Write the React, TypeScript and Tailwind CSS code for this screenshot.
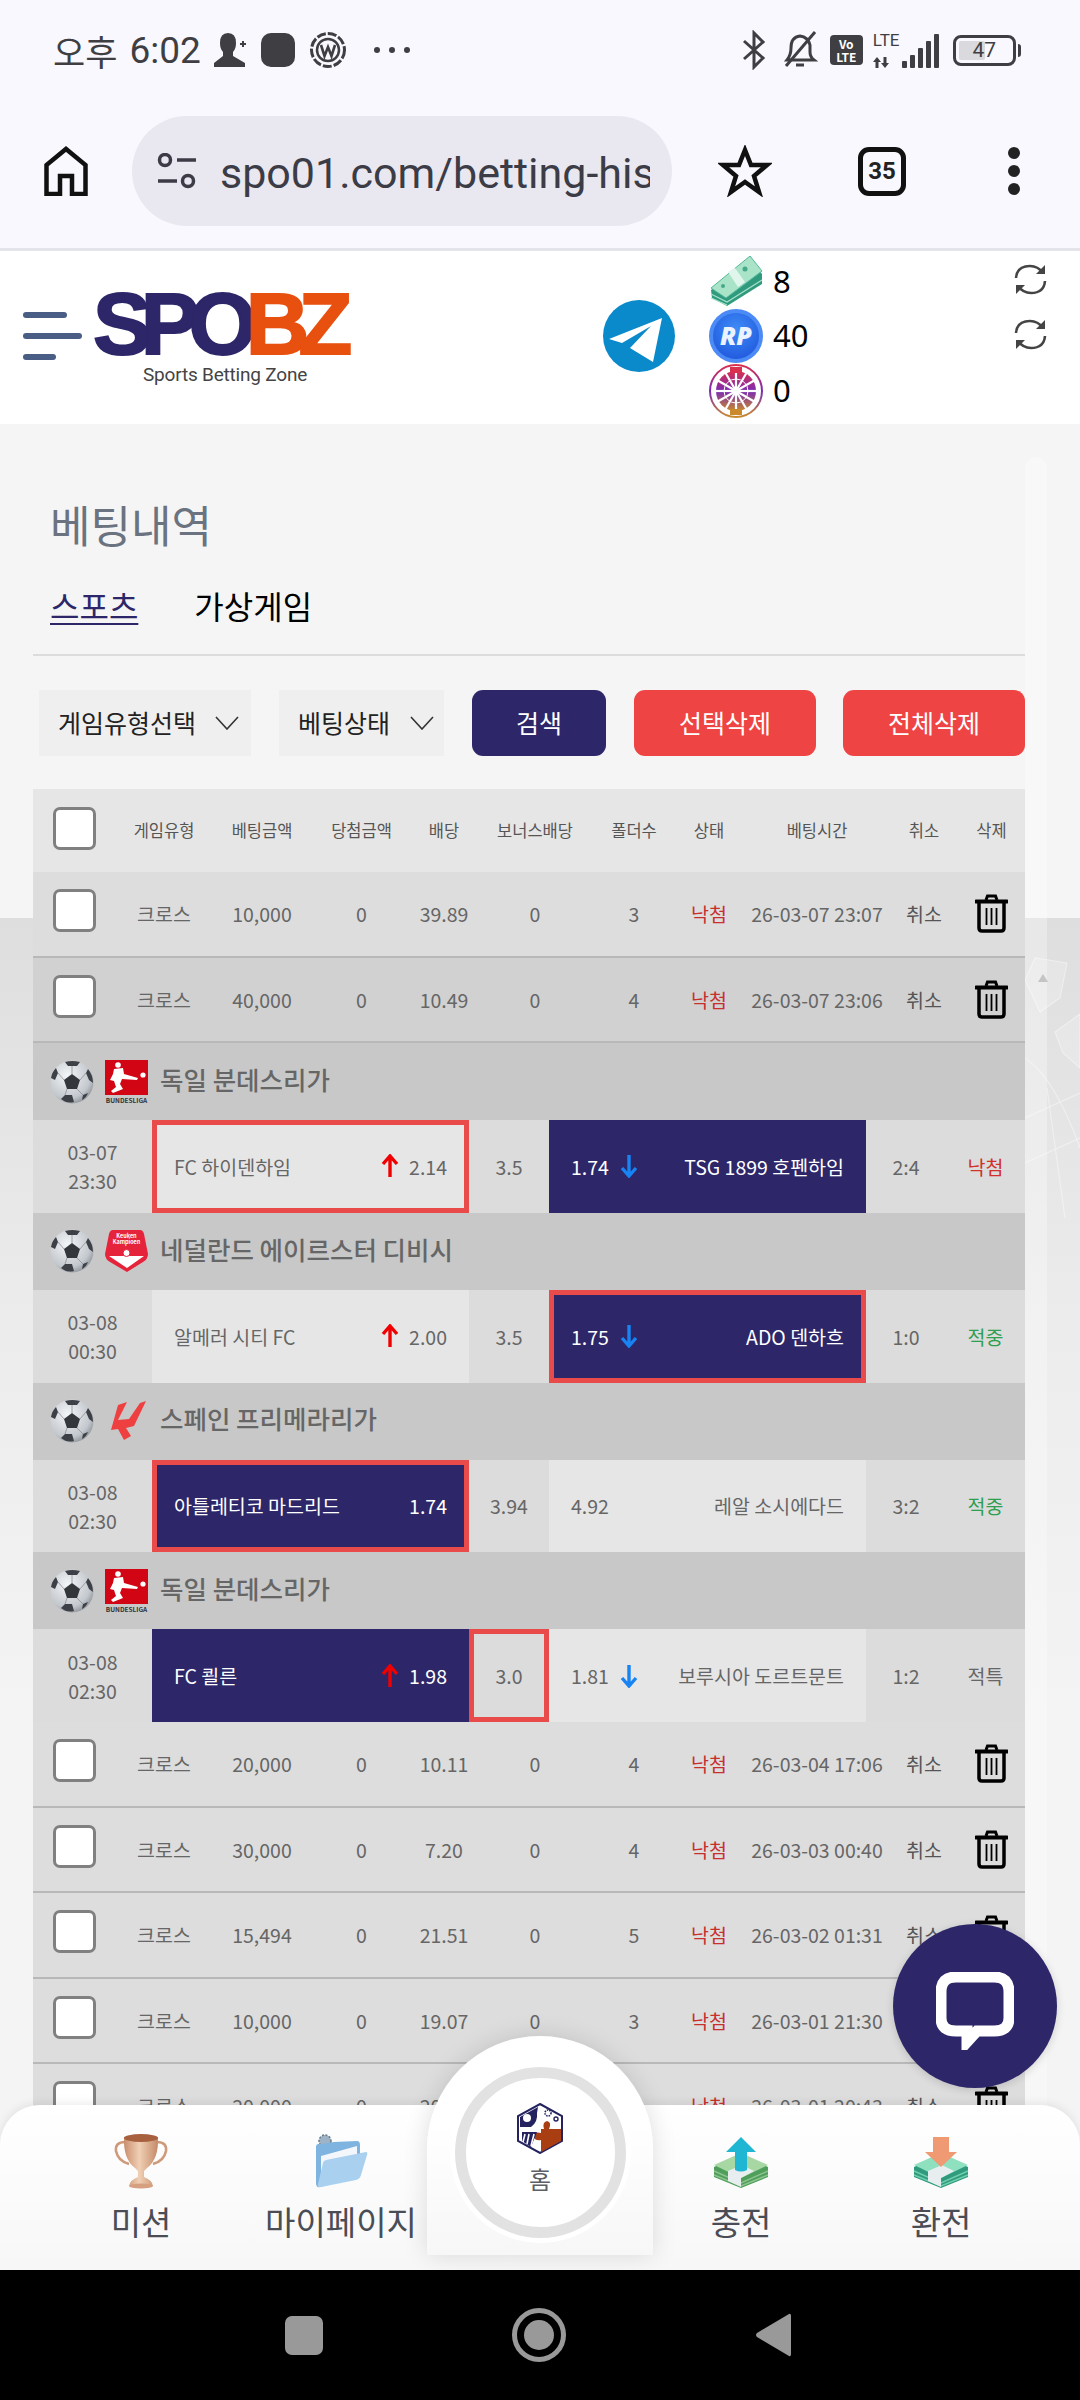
import type { ReactNode } from "react";

type BetRow = {
  amount: string;
  odds: string;
  folders: string;
  time: string;
  dark?: boolean;
};

type Match = {
  league: string;
  logo: "bundes" | "keuken" | "laliga";
  date: string;
  clock: string;
  home: string;
  homeOdds: string;
  homeUp?: boolean;
  line: string;
  away: string;
  awayOdds: string;
  awayDown?: boolean;
  score: string;
  result: string;
  resultColor: string;
  pick: "home" | "away";
  boxed: "home" | "away" | "line";
};

const topRows: BetRow[] = [
  { amount: "10,000", odds: "39.89", folders: "3", time: "26-03-07 23:07" },
  { amount: "40,000", odds: "10.49", folders: "4", time: "26-03-07 23:06", dark: true },
];

const bottomRows: BetRow[] = [
  { amount: "20,000", odds: "10.11", folders: "4", time: "26-03-04 17:06" },
  { amount: "30,000", odds: "7.20", folders: "4", time: "26-03-03 00:40" },
  { amount: "15,494", odds: "21.51", folders: "5", time: "26-03-02 01:31" },
  { amount: "10,000", odds: "19.07", folders: "3", time: "26-03-01 21:30" },
  { amount: "20,000", odds: "20.15", folders: "4", time: "26-03-01 20:43" },
];

const matches: Match[] = [
  {
    league: "독일 분데스리가", logo: "bundes", date: "03-07", clock: "23:30",
    home: "FC 하이덴하임", homeOdds: "2.14", homeUp: true, line: "3.5",
    away: "TSG 1899 호펜하임", awayOdds: "1.74", awayDown: true, score: "2:4",
    result: "낙첨", resultColor: "text-[#d0312d]", pick: "away", boxed: "home",
  },
  {
    league: "네덜란드 에이르스터 디비시", logo: "keuken", date: "03-08", clock: "00:30",
    home: "알메러 시티 FC", homeOdds: "2.00", homeUp: true, line: "3.5",
    away: "ADO 덴하흐", awayOdds: "1.75", awayDown: true, score: "1:0",
    result: "적중", resultColor: "text-[#2e9e4f]", pick: "away", boxed: "away",
  },
  {
    league: "스페인 프리메라리가", logo: "laliga", date: "03-08", clock: "02:30",
    home: "아틀레티코 마드리드", homeOdds: "1.74", line: "3.94",
    away: "레알 소시에다드", awayOdds: "4.92", score: "3:2",
    result: "적중", resultColor: "text-[#2e9e4f]", pick: "home", boxed: "home",
  },
  {
    league: "독일 분데스리가", logo: "bundes", date: "03-08", clock: "02:30",
    home: "FC 쾰른", homeOdds: "1.98", homeUp: true, line: "3.0",
    away: "보루시아 도르트문트", awayOdds: "1.81", awayDown: true, score: "1:2",
    result: "적특", resultColor: "text-[#666]", pick: "home", boxed: "line",
  },
];

function Trash() {
  return (
    <svg width="33" height="39" viewBox="0 0 33 39" fill="none" stroke="#000">
      <path d="M11 6 L12.5 2 H20.5 L22 6" strokeWidth="3" />
      <path d="M1 7.5 H32" strokeWidth="4" strokeLinecap="round" />
      <path d="M4 9 V34 Q4 37 7 37 H26 Q29 37 29 34 V9" strokeWidth="3.5" />
      <path d="M11.5 14 V31 M16.5 14 V31 M21.5 14 V31" strokeWidth="1.8" />
    </svg>
  );
}

function Check() {
  return <div className="h-[43px] w-[43px] rounded-[7px] border-[3px] border-[#808080] bg-white" />;
}

const rowGrid = "grid grid-cols-[82px_98px_98px_101px_64px_118px_80px_70px_146px_68px_67px] items-center text-center";

function DataRow({ row }: { row: BetRow }) {
  return (
    <div className={`${rowGrid} h-[85.5px] border-b-[2px] border-[#b8b8b8] text-[19.5px] text-[#666] ${row.dark ? "bg-[#d1d1d1]" : "bg-[#dddddd]"}`}>
      <div className="mb-[6px] flex justify-center"><Check /></div>
      <div>크로스</div>
      <div>{row.amount}</div>
      <div>0</div>
      <div>{row.odds}</div>
      <div>0</div>
      <div>{row.folders}</div>
      <div className="text-[#c8302e]">낙첨</div>
      <div className="whitespace-nowrap">{row.time}</div>
      <div className="text-[#555]">취소</div>
      <div className="flex justify-center"><Trash /></div>
    </div>
  );
}

function Ball() {
  return (
    <svg width="44" height="44" viewBox="0 0 44 44">
      <defs>
        <radialGradient id="ballFill" cx="0.4" cy="0.35" r="0.75">
          <stop offset="0" stopColor="#f4f6f8" />
          <stop offset="0.7" stopColor="#c3c8ce" />
          <stop offset="1" stopColor="#7d838a" />
        </radialGradient>
      </defs>
      <circle cx="22" cy="22" r="21.5" fill="url(#ballFill)" />
      <path d="M22 14 L30 20 L27 29 H17 L14 20 Z" fill="#33363b" />
      <path d="M15 2 Q22 0 30 2 L27 6 H18 Z M38 9 Q43 15 43 23 L39 20 L36 13 Z M1 18 Q2 12 6 8 L8 13 L5 20 Z M11 39 L15 35 H22 L24 42 Q17 44 11 39 Z M38 33 L33 35 L32 40 Q36 38 38 33 Z" fill="#3d4046" />
      <path d="M22 14 V6 M30 20 L36 13 M27 29 L33 35 M17 29 L15 35 M14 20 L8 13" stroke="#8b9096" strokeWidth="0.8" />
    </svg>
  );
}

function LeagueLogo({ kind }: { kind: Match["logo"] }) {
  if (kind === "bundes") {
    return (
      <div className="flex h-[44px] w-[43px] flex-col items-center">
        <svg width="43" height="35" viewBox="0 0 43 35">
          <rect width="43" height="35" fill="#d20515" />
          <circle cx="38" cy="15" r="2.6" fill="#fff" />
          <circle cx="13" cy="5" r="2.8" fill="#fff" />
          <path d="M9 9 L18 8 L19 14 L33 18 L32 20 L17 19 L15 24 L18 29 L8 33 L6 31 L11 27 L9 21 L5 20 L8 14 Z" fill="#fff" />
        </svg>
        <span className="mt-[1px] text-[6.5px] leading-[8px] font-bold text-[#333]">BUNDESLIGA</span>
      </div>
    );
  }
  if (kind === "keuken") {
    return (
      <div className="relative flex h-[44px] w-[43px] flex-col items-center">
        <svg width="43" height="44" viewBox="0 0 43 44" className="absolute inset-0">
          <path d="M8 1 H35 Q38 1 39 5 L43 25 Q43 30 38 33 L22 43 L5 33 Q0 30 0 25 L4 5 Q5 1 8 1 Z" fill="#e5243b" />
          <path d="M4 27 H39 L22 39 Z" fill="#fff" />
          <circle cx="21.5" cy="24" r="3.5" fill="#fff" stroke="#e5243b" />
        </svg>
        <span className="relative mt-[4px] text-[5.5px] leading-[6px] font-bold text-white">Keuken</span>
        <span className="relative text-[5.5px] leading-[6px] font-bold text-white">Kampioen</span>
      </div>
    );
  }
  return (
    <svg width="43" height="44" viewBox="0 0 43 44">
      <path d="M13 6 L22 3 L13 21 L24 20 L35 4 L41 2 L29 27 L21 29 L26 37 L19 41 L13 30 L6 31 Z" fill="#ee4040" />
    </svg>
  );
}

function UpArrow() {
  return (
    <svg width="18" height="24" viewBox="0 0 18 24" fill="none" stroke="#f00000" strokeWidth="3.4">
      <path d="M9 23 V3 M2 10 L9 2 L16 10" />
    </svg>
  );
}

function DownArrow() {
  return (
    <svg width="18" height="24" viewBox="0 0 18 24" fill="none" stroke="#1883f2" strokeWidth="3.4">
      <path d="M9 1 V21 M2 14 L9 22 L16 14" />
    </svg>
  );
}

function MatchBlock({ match }: { match: Match }) {
  return (
    <div>
      <div className="flex h-[77px] items-center bg-[#c8c8c8] pl-[17px]">
        <Ball />
        <div className="ml-[11px]"><LeagueLogo kind={match.logo} /></div>
        <div className="mb-[5px] ml-[12px] text-[25.5px] font-medium text-[#666]">{match.league}</div>
      </div>
      <div className="grid h-[92.75px] grid-cols-[119px_317px_80px_317px_80px_79px] bg-[#dcdcdc] text-[19.5px] text-[#666]">
        <div className="flex flex-col items-center justify-center leading-[29px]">
          <span>{match.date}</span>
          <span>{match.clock}</span>
        </div>
        <div className={`flex items-center justify-between border-[5px] px-[17px] ${match.boxed === "home" ? "border-[#e94b4b]" : "border-transparent"} ${match.pick === "home" ? "bg-[#2d2769] text-white" : "bg-[#e6e6e6]"}`}>
          <span>{match.home}</span>
          <span className="flex items-center gap-[10px]">
            {match.homeUp && <UpArrow />}
            {match.homeOdds}
          </span>
        </div>
        <div className={`flex items-center justify-center border-[5px] ${match.boxed === "line" ? "border-[#e94b4b]" : "border-transparent"}`}>{match.line}</div>
        <div className={`flex items-center justify-between border-[5px] px-[17px] ${match.boxed === "away" ? "border-[#e94b4b]" : "border-transparent"} ${match.pick === "away" ? "bg-[#2d2769] text-white" : "bg-[#e6e6e6]"}`}>
          <span className="flex items-center gap-[11px]">
            {match.awayOdds}
            {match.awayDown && <DownArrow />}
          </span>
          <span>{match.away}</span>
        </div>
        <div className="flex items-center justify-center">{match.score}</div>
        <div className={`flex items-center justify-center ${match.resultColor}`}>{match.result}</div>
      </div>
    </div>
  );
}

function StatusBar() {
  return (
    <div className="flex h-[100px] items-center bg-[#f8f8fe] pl-[53px] text-[#3f3f43]">
      <span className="text-[35px] leading-none">오후</span>
      <span className="ml-[12px] font-['Roboto',sans-serif] text-[37px] leading-none">6:02</span>
      <svg className="ml-[12px]" width="34" height="36" viewBox="0 0 34 36" fill="#3f3f43">
        <path d="M15 1 Q23 1 23 11 Q23 17 20 20 V24 L32 31 V35 H1 V31 L10 24 V20 Q7 17 7 11 Q7 1 15 1 Z" />
        <path d="M27 12 H33 M30 9 V15" stroke="#3f3f43" strokeWidth="2" />
      </svg>
      <div className="ml-[14px] h-[34px] w-[34px] rounded-[10px] bg-[#3f3f43]" />
      <svg className="ml-[15px]" width="36" height="36" viewBox="0 0 36 36" fill="none" stroke="#3f3f43">
        <circle cx="18" cy="18" r="16.5" strokeWidth="3" strokeDasharray="9 2" />
        <circle cx="18" cy="18" r="11" strokeWidth="2.5" />
        <path d="M11 13 L14.5 24 L18 15 L21.5 24 L25 13" strokeWidth="2.6" />
      </svg>
      <div className="ml-[28px] flex gap-[9px]">
        <div className="h-[6px] w-[6px] rounded-full bg-[#3f3f43]" />
        <div className="h-[6px] w-[6px] rounded-full bg-[#3f3f43]" />
        <div className="h-[6px] w-[6px] rounded-full bg-[#3f3f43]" />
      </div>
      <svg className="ml-[331px]" width="26" height="40" viewBox="0 0 26 40" fill="none" stroke="#3f3f43" strokeWidth="3">
        <path d="M3 11 L22 28 L13 37 V3 L22 12 L3 29" />
      </svg>
      <svg className="ml-[15px]" width="36" height="40" viewBox="0 0 36 40" fill="none" stroke="#3f3f43" strokeWidth="3">
        <path d="M5 30 Q9 25 9 18 Q9 7 18 6 Q26 7 28 15 V22 Q28 27 32 30 Z" />
        <path d="M14 35 H22" />
        <path d="M4 36 L33 2" />
      </svg>
      <div className="ml-[12px] flex h-[30px] w-[33px] flex-col items-center justify-center rounded-[4px] bg-[#3f3f43] text-[12px] leading-[13px] font-bold text-white">
        <span>Vo</span>
        <span>LTE</span>
      </div>
      <div className="ml-[10px] flex h-[36px] w-[66px] justify-between">
        <div className="flex h-full flex-col justify-between">
          <span className="font-['Roboto',sans-serif] text-[17px] leading-[16px]">LTE</span>
          <svg width="16" height="11" viewBox="0 0 16 11" fill="#3f3f43">
            <path d="M4 0 L8 5 H5.5 V11 H2.5 V5 H0 Z M12 11 L8 6 H10.5 V0 H13.5 V6 H16 Z" />
          </svg>
        </div>
        <div className="flex items-end gap-[3px]">
          <div className="h-[7px] w-[5px] rounded-[1px] bg-[#3f3f43]" />
          <div className="h-[13px] w-[5px] rounded-[1px] bg-[#3f3f43]" />
          <div className="h-[20px] w-[5px] rounded-[1px] bg-[#3f3f43]" />
          <div className="h-[27px] w-[5px] rounded-[1px] bg-[#3f3f43]" />
          <div className="h-[34px] w-[5px] rounded-[1px] bg-[#3f3f43]" />
        </div>
      </div>
      <div className="ml-[14px] flex items-center">
        <div className="relative flex h-[31px] w-[63px] items-center justify-center overflow-hidden rounded-[8px] border-[3px] border-[#3f3f43]">
          <div className="absolute top-[3px] bottom-[3px] left-[3px] w-[26px] rounded-[2px] bg-[#d9d9de]" />
          <span className="relative font-['Roboto',sans-serif] text-[21px] leading-none">47</span>
        </div>
        <div className="ml-[2px] h-[13px] w-[3px] rounded-r bg-[#3f3f43]" />
      </div>
    </div>
  );
}

function UrlBar() {
  return (
    <div className="flex h-[151px] items-start border-b-[3px] border-[#e3e3ea] bg-[#f8f8fe] pt-[16px]">
      <div className="flex h-[110px] items-center">
        <svg className="ml-[44px]" width="44" height="50" viewBox="0 0 44 50" fill="none" stroke="#111" strokeWidth="4.5">
          <path d="M2.5 48 V19 L22 3 L41.5 19 V48 H28 V30 H16 V48 Z" />
        </svg>
        <div className="ml-[44px] flex h-[110px] w-[540px] items-center overflow-hidden rounded-full bg-[#e9e8f1] pl-[25px]">
          <svg width="40" height="36" viewBox="0 0 40 36" fill="none" stroke="#3c3c46" strokeWidth="3.5" className="shrink-0">
            <circle cx="8" cy="7" r="5.5" />
            <path d="M20 7 H39" />
            <circle cx="31" cy="28" r="5.5" />
            <path d="M1 28 H20" />
          </svg>
          <span className="ml-[23px] w-[430px] shrink-0 overflow-hidden pt-[4px] font-['Roboto',sans-serif] text-[43px] whitespace-nowrap text-[#3c3c46]">spo01.com/betting-history</span>
        </div>
        <svg className="ml-[46px]" width="54" height="52" viewBox="0 0 54 52" fill="none" stroke="#111" strokeWidth="4.5">
          <path d="M27 5 L33 20 H49 L36 31 L41 47 L27 37 L13 47 L18 31 L5 20 H21 Z" />
        </svg>
        <div className="ml-[86px] flex h-[49px] w-[48px] items-center justify-center rounded-[11px] border-[5px] border-[#111] font-['Roboto',sans-serif] text-[24px] font-bold text-[#222]">35</div>
        <div className="ml-[102px] flex flex-col gap-[6px]">
          <div className="h-[12px] w-[12px] rounded-full bg-[#222]" />
          <div className="h-[12px] w-[12px] rounded-full bg-[#222]" />
          <div className="h-[12px] w-[12px] rounded-full bg-[#222]" />
        </div>
      </div>
    </div>
  );
}

function Cash() {
  return (
    <svg width="54" height="50" viewBox="0 0 54 50">
      <path d="M2 34 L41 4 L53 18 V28 L18 50 L3 42 Z" fill="#2f9a7e" />
      <path d="M2 38 L18 46 L53 24 M2 42 L18 49" stroke="#a6e2c8" strokeWidth="1.2" fill="none" />
      <path d="M2 32 L41 0 L53 15 L17 42 Z" fill="#a9e3c8" stroke="#55b89a" strokeWidth="1" />
      <path d="M19 16 L26 12 L36 26 L29 31 Z" fill="#e0f5ec" />
      <circle cx="14" cy="30" r="2" fill="#46a98b" />
      <circle cx="36" cy="13" r="2.5" fill="#46a98b" />
    </svg>
  );
}

function RpCoin() {
  return (
    <div className="flex h-[54px] w-[54px] items-center justify-center rounded-full border-[4px] border-[#4c8bf5] bg-[radial-gradient(circle_at_50%_35%,#3f8cf8,#1a4fd8)] font-['Open_Sans',sans-serif] text-[25px] leading-none font-extrabold text-[#eaf3ff] italic">
      RP
    </div>
  );
}

function DartWheel() {
  const spokes = [0, 30, 60, 90, 120, 150, 180, 210, 240, 270, 300, 330];
  return (
    <svg width="54" height="54" viewBox="0 0 54 54">
      <defs>
        <linearGradient id="dart" x1="0" y1="0" x2="0" y2="1">
          <stop offset="0" stopColor="#d9304f" />
          <stop offset="0.5" stopColor="#7a2bb5" />
          <stop offset="1" stopColor="#c9892c" />
        </linearGradient>
      </defs>
      <circle cx="27" cy="27" r="26" fill="#fff" stroke="url(#dart)" strokeWidth="2" />
      <circle cx="27" cy="27" r="20" fill="url(#dart)" />
      {spokes.map((a) => (
        <path key={a} d="M27 27 L27 5" stroke="#fff" strokeWidth="2.2" transform={`rotate(${a} 27 27)`} />
      ))}
      <circle cx="27" cy="27" r="12" fill="none" stroke="#fff" strokeWidth="1" />
      <rect x="21" y="3" width="12" height="6" fill="#d9304f" />
      <rect x="21" y="45" width="12" height="6" fill="#c9892c" />
    </svg>
  );
}

function Refresh() {
  return (
    <svg width="33" height="33" viewBox="0 0 33 33" fill="none" stroke="#444" strokeWidth="2.6">
      <path d="M2 15 Q3 3 16 3 Q24 3 29 10" />
      <path d="M31 2 V11 L22 11 Z" fill="#444" stroke="none" />
      <path d="M31 18 Q30 30 17 30 Q9 30 4 23" />
      <path d="M2 31 V22 L11 22 Z" fill="#444" stroke="none" />
    </svg>
  );
}

function Header() {
  return (
    <div className="flex h-[173px] items-start bg-white">
      <div className="ml-[23px] mt-[61px] flex flex-col gap-[15px]">
        <div className="h-[6px] w-[44px] rounded-full bg-[#4a5d85]" />
        <div className="h-[6px] w-[59px] rounded-full bg-[#4a5d85]" />
        <div className="h-[6px] w-[33px] rounded-full bg-[#4a5d85]" />
      </div>
      <div className="ml-[11px] mt-[35px] flex w-[256px] flex-col font-['Liberation_Sans',sans-serif]">
        <div className="h-[77px] text-[88px] leading-[76px] font-bold tracking-[-11px] whitespace-nowrap [-webkit-text-stroke:2px_currentColor]">
          <span className="text-[#2d2769]">SPO</span>
          <span className="text-[#e8500f]">BZ</span>
        </div>
        <div className="ml-[50px] font-['Roboto',sans-serif] text-[19px] leading-[24px] tracking-[-0.2px] whitespace-nowrap text-[#444]">Sports Betting Zone</div>
      </div>
      <svg className="ml-[254px] mt-[49px]" width="72" height="72" viewBox="0 0 72 72">
        <circle cx="36" cy="36" r="36" fill="#0a8acb" />
        <path d="M6 39 L59 18 L50 62 L27 48 L48 26 L19 43 Z" fill="#fff" />
      </svg>
      <div className="ml-[34px] mt-[3px] flex flex-col font-['Noto_Sans',sans-serif] text-[31px] text-black">
        <div className="flex h-[54px] items-center gap-[10px]"><Cash /><span>8</span></div>
        <div className="flex h-[55px] items-center gap-[10px]"><RpCoin /><span>40</span></div>
        <div className="flex h-[55px] items-center gap-[10px]"><DartWheel /><span>0</span></div>
      </div>
      <div className="ml-auto mr-[33px] mt-[12px] flex flex-col gap-[22px]">
        <Refresh />
        <Refresh />
      </div>
    </div>
  );
}

function Trophy() {
  return (
    <svg width="54" height="56" viewBox="0 0 54 56">
      <defs>
        <linearGradient id="copper" x1="0" y1="0" x2="1" y2="0">
          <stop offset="0" stopColor="#c98e6d" />
          <stop offset="0.45" stopColor="#f0cfb5" />
          <stop offset="1" stopColor="#c48a68" />
        </linearGradient>
      </defs>
      <path d="M11 9 Q1 9 2 18 Q4 28 15 31 M43 9 Q53 9 52 18 Q50 28 39 31" fill="none" stroke="#cf9a7a" strokeWidth="2.6" />
      <path d="M10 4 Q27 0 44 4 Q45 26 33 35 L30 38 V44 Q38 47 39 53 H15 Q16 47 24 44 V38 L21 35 Q9 26 10 4 Z" fill="url(#copper)" />
      <ellipse cx="27" cy="5" rx="17" ry="4" fill="#a8613f" />
      <ellipse cx="27" cy="53" rx="12" ry="2.5" fill="#d69f80" />
    </svg>
  );
}

function Folder() {
  return (
    <svg width="54" height="56" viewBox="0 0 54 56">
      <circle cx="11" cy="8" r="6" fill="#9fb3c6" stroke="#687a8c" strokeWidth="1.5" strokeDasharray="2 1.5" />
      <path d="M2 14 Q2 10 8 11 L20 9 L43 8 Q46 8 46 12 V44 L6 54 Q2 55 2 50 Z" fill="#7fb3e0" />
      <path d="M7 23 L43 13 V30 L7 40 Z" fill="#f3f7fb" />
      <path d="M12 27 L52 19 Q54 19 53 22 L47 42 Q46 46 42 47 L7 54 Q3 55 4 51 L9 30 Q9 28 12 27 Z" fill="#a9d0ef" />
    </svg>
  );
}

function BankNotes({ up }: { up: boolean }) {
  const greens = up ? ["#4f9e5c", "#a7d8a4", "#8bc48d"] : ["#2f9a7e", "#8fe0bf", "#6fcfaa"];
  return (
    <svg width="56" height="52" viewBox="0 0 56 52">
      <path d="M1 30 L28 18 L55 30 V40 L28 51 L1 40 Z" fill={greens[0]} />
      <path d="M1 34 L28 46 L55 34 M1 38 L28 49 L55 38" fill="none" stroke={greens[2]} strokeWidth="1.4" />
      <path d="M1 28 L28 16 L55 28 L28 41 Z" fill={greens[1]} />
      <path d="M15 34 L29 28 L41 34 L28 41 V50 L15 44 Z" fill="#e8eef0" />
      {up ? (
        <path d="M28 0 L43 15 H34 V33 Q28 36 22 33 V15 H13 Z" fill="#1fb6d3" />
      ) : (
        <path d="M20 0 H36 V15 H44 L28 30 L12 15 H20 Z" fill="#f09a74" />
      )}
    </svg>
  );
}

function HexLogo() {
  return (
    <svg width="46" height="51" viewBox="0 0 46 51">
      <path d="M23 1 L45 13 V38 L23 50 L1 38 V13 Z" fill="#fff" stroke="#25235f" strokeWidth="2" />
      <path d="M21 4 L3 14 V24 H14 Q21 19 20 10 Z" fill="#25235f" />
      <circle cx="10" cy="15" r="4" fill="#fff" />
      <path d="M44 26 H32 Q35 19 30 18 Q25 19 27 26 H24 V30 Q17 28 17 34 Q18 38 24 37 V49 L44 38 Z" fill="#a83e12" />
      <path d="M5 29 H20 L14 44 L5 38 Z" fill="#25235f" />
      <path d="M8 31 L6 39 M12 31 L10 41 M17 31 L14 43" stroke="#fff" strokeWidth="1.6" />
      <circle cx="31" cy="10" r="3" fill="none" stroke="#25235f" strokeWidth="1.6" strokeDasharray="1.5 1" />
      <circle cx="39" cy="16" r="2" fill="none" stroke="#25235f" strokeWidth="1.4" />
    </svg>
  );
}

function NavItem({ label, children }: { label: string; children: ReactNode }) {
  return (
    <div className="flex flex-col items-center">
      <div className="flex h-[58px] items-end">{children}</div>
      <div className="mt-[12px] text-[33px] leading-[40px] whitespace-nowrap text-[#4a4d55]">{label}</div>
    </div>
  );
}

function BottomNav() {
  return (
    <div className="absolute right-0 bottom-0 left-0 h-[165px] rounded-t-[40px] bg-[linear-gradient(#ffffff,#f7f7f7)] shadow-[0_-2px_10px_rgba(0,0,0,0.08)]">
      <div className="grid grid-cols-[200px_200px_200px_200px_200px] pl-[41px] pt-[26px]">
        <NavItem label="미션"><Trophy /></NavItem>
        <NavItem label="마이페이지"><Folder /></NavItem>
        <div />
        <NavItem label="충전"><BankNotes up /></NavItem>
        <NavItem label="환전"><BankNotes up={false} /></NavItem>
      </div>
      <div className="absolute top-[-69px] left-[427px] flex h-[219px] w-[226px] justify-center rounded-t-[113px] bg-[linear-gradient(#ffffff_40%,#f7f7f7)] pt-[31px] shadow-[0_0_24px_rgba(0,0,0,0.13)]">
        <div className="flex h-[171px] w-[171px] flex-col items-center rounded-full border-[11px] border-[#e2e2e2] bg-white pt-[25px] shadow-[0_0_0_5px_#ffffff]">
          <HexLogo />
          <div className="mt-[8px] text-[24px] leading-[34px] text-[#5c5f66]">홈</div>
        </div>
      </div>
    </div>
  );
}

function AndroidBar() {
  return (
    <div className="flex h-[130px] items-center bg-black">
      <div className="ml-[285px] h-[39px] w-[38px] rounded-[7px] bg-[#999]" />
      <div className="ml-[189px] flex h-[54px] w-[54px] items-center justify-center rounded-full border-[5px] border-[#999]">
        <div className="h-[30px] w-[30px] rounded-full bg-[#999]" />
      </div>
      <svg className="ml-[189px]" width="36" height="46" viewBox="0 0 36 46">
        <path d="M34 2 Q36 1 36 4 V42 Q36 45 34 44 L2 25 Q0 23 2 21 Z" fill="#999" />
      </svg>
    </div>
  );
}

export default function App() {
  return (
    <div className="flex h-[2400px] w-[1080px] flex-col overflow-hidden bg-white font-['Noto_Sans_CJK_KR','Noto_Sans',sans-serif]">
      <StatusBar />
      <UrlBar />
      <Header />

      <div className="relative flex-1 overflow-hidden bg-[linear-gradient(#f5f5f5_494px,#dedede_494px,#ececec_900px,#f4f4f4_1300px)]">
        {/* scroll track + faded card art in the right gutter */}
        <div className="absolute top-[33px] bottom-0 left-[1025px] w-[22px] rounded-t-full bg-white/30" />
        <svg className="absolute top-[494px] left-[1025px]" width="55" height="320" viewBox="0 0 55 320" fill="none" stroke="#ffffff" strokeOpacity="0.4" strokeWidth="1.2">
          <path d="M0 62 L10 40 L42 45 L35 80 L15 94 Z" fill="#ffffff" fillOpacity="0.2" />
          <path d="M18 56 L23 64 L13 64 Z" fill="#c4c4c4" stroke="none" />
          <path d="M30 114 L55 96 V150 L38 135 Z" fill="#ffffff" fillOpacity="0.2" />
          <path d="M0 140 Q30 160 55 230 M0 200 L55 175 M0 245 L55 220 M22 170 L40 300" />
        </svg>

        <div className="relative ml-[33px] w-[992px]">
          <div className="pt-[70px] pl-[17px] text-[44px] leading-[60px] text-[#6b7280]">베팅내역</div>
          <div className="mt-[27px] flex h-[75px] items-start border-b-[2px] border-[#dcdcdc] pl-[17px] text-[32px] leading-[48px]">
            <span className="text-[#2d2769] underline decoration-2 underline-offset-[4px]">스포츠</span>
            <span className="ml-[56px] text-black">가상게임</span>
          </div>
          <div className="mt-[34px] flex h-[66px] text-[25px]">
            <div className="ml-[6px] flex w-[212px] items-center bg-[#efefef] pl-[19px] text-[#222]">
              <span>게임유형선택</span>
              <svg className="ml-[19px]" width="24" height="14" viewBox="0 0 24 14" fill="none" stroke="#333" strokeWidth="1.6"><path d="M1 1 L12 13 L23 1" /></svg>
            </div>
            <div className="ml-[28px] flex w-[165px] items-center bg-[#efefef] pl-[19px] text-[#222]">
              <span>베팅상태</span>
              <svg className="ml-[20px]" width="24" height="14" viewBox="0 0 24 14" fill="none" stroke="#333" strokeWidth="1.6"><path d="M1 1 L12 13 L23 1" /></svg>
            </div>
            <button className="ml-[28px] w-[134px] rounded-[11px] bg-[#2d2769] text-white">검색</button>
            <button className="ml-[28px] w-[182px] rounded-[11px] bg-[#ef4444] text-white">선택삭제</button>
            <button className="ml-[27px] w-[182px] rounded-[11px] bg-[#ef4444] text-white">전체삭제</button>
          </div>

          <div className="mt-[33px]">
            <div className={`${rowGrid} h-[83px] bg-[#e6e6e6] text-[16.5px] text-[#555]`}>
              <div className="mb-[4px] flex justify-center"><Check /></div>
              <div>게임유형</div>
              <div>베팅금액</div>
              <div>당첨금액</div>
              <div>배당</div>
              <div>보너스배당</div>
              <div>폴더수</div>
              <div>상태</div>
              <div>베팅시간</div>
              <div>취소</div>
              <div>삭제</div>
            </div>
            {topRows.map((row) => <DataRow key={row.time} row={row} />)}
            {matches.map((match, i) => <MatchBlock key={i} match={match} />)}
            {bottomRows.map((row) => <DataRow key={row.time} row={row} />)}
          </div>
        </div>

        <BottomNav />

        <div className="absolute top-[1500px] right-[23px] flex h-[164px] w-[164px] items-center justify-center rounded-full bg-[#2d2769] shadow-[0_2px_8px_rgba(0,0,0,0.15)]">
          <svg className="mt-[10px]" width="78" height="78" viewBox="0 0 78 78" fill="none">
            <path d="M20 5 H58 Q73 5 73 20 V46 Q73 59 58 59 H41 L31 70 V59 H20 Q5 59 5 46 V20 Q5 5 20 5 Z" stroke="#fff" strokeWidth="11" />
          </svg>
        </div>
      </div>

      <AndroidBar />
    </div>
  );
}
